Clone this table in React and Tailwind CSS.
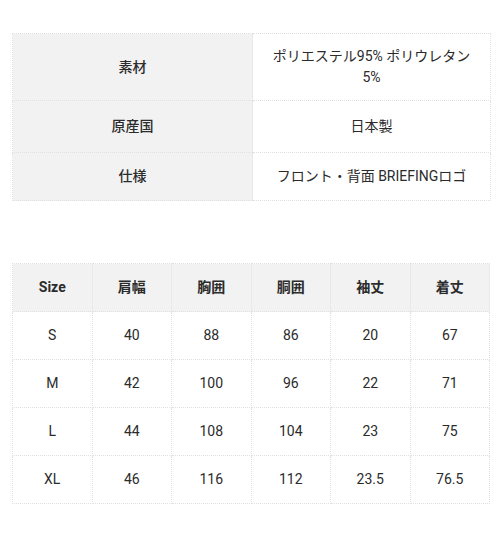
const specs = [
  { label: "素材", value: "ポリエステル95% ポリウレタン5%" },
  { label: "原産国", value: "日本製" },
  { label: "仕様", value: "フロント・背面 BRIEFINGロゴ" },
];

const headers = ["Size", "肩幅", "胸囲", "胴囲", "袖丈", "着丈"];

const sizes = [
  ["S", "40", "88", "86", "20", "67"],
  ["M", "42", "100", "96", "22", "71"],
  ["L", "44", "108", "104", "23", "75"],
  ["XL", "46", "116", "112", "23.5", "76.5"],
];

const cell = "border border-dotted border-[#e0e0e0] text-center align-middle";
const pad = ["py-[12px]", "py-[15px]", "py-[13px]"];

export default function App() {
  return (
    <div
      className="min-h-[560px] bg-white px-3 pt-[33px] text-[14px] text-[#2b2b2b]"
      style={{ fontFamily: 'Roboto, "Noto Sans CJK JP", sans-serif' }}
    >
      <table className="w-[478px] table-fixed border-collapse">
        <colgroup>
          <col className="w-[240px]" />
          <col className="w-[238px]" />
        </colgroup>
        <tbody>
          {specs.map((row, i) => (
            <tr key={row.label}>
              <th className={`${cell} bg-[#f2f2f2] font-medium leading-[21px] ${pad[i]}`}>
                {row.label}
              </th>
              <td className={`${cell} px-4 leading-[21px] ${pad[i]}`}>
                {row.value}
              </td>
            </tr>
          ))}
        </tbody>
      </table>

      <table className="mt-[62px] w-[478px] table-fixed border-collapse">
        <thead>
          <tr>
            {headers.map((h) => (
              <th key={h} className={`${cell} h-[48px] bg-[#f2f2f2] font-bold`}>
                {h}
              </th>
            ))}
          </tr>
        </thead>
        <tbody>
          {sizes.map((row) => (
            <tr key={row[0]}>
              {row.map((v, i) => (
                <td key={i} className={`${cell} h-[48px]`}>
                  {v}
                </td>
              ))}
            </tr>
          ))}
        </tbody>
      </table>
    </div>
  );
}
